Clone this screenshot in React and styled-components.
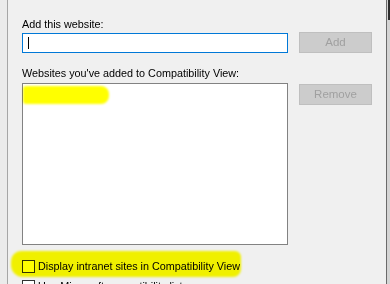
import React from "react";
import styled, { createGlobalStyle } from "styled-components";

const Global = createGlobalStyle`
  html, body { margin: 0; padding: 0; }
  body { width: 390px; height: 284px; overflow: hidden; background: #f0f0f0; }
  * { box-sizing: border-box; }
`;

const Page = styled.div`
  display: flex;
  width: 390px;
  height: 284px;
  overflow: hidden;
  font-family: "Liberation Sans", Arial, sans-serif;
  font-size: 10.8px;
  color: #000;
`;

const LeftStrip = styled.div`
  width: 8px;
  flex: none;
  background: #ebebeb;
  border-right: 1px solid #a6a6a6;
`;

const Dialog = styled.div`
  position: relative;
  flex: 1;
  background: #f0f0f0;
  padding: 16px 0 0 14px;
  display: grid;
  grid-template-columns: 266px 73px;
  column-gap: 11px;
  align-content: start;
`;

const RightEdge = styled.div`
  width: 4px;
  flex: none;
  display: flex;
  flex-direction: column;
  border-left: 1px solid #6a6a6a;
  background: #d4d4d4;
`;

const EdgeTop = styled.div`
  height: 20px;
  margin-left: 1px;
  background: #2d2d2d;
`;

const Label = styled.div`
  grid-column: 1 / 3;
  line-height: 16px;
  height: 16px;
  margin-top: ${(p) => p.$mt || 0}px;
  white-space: nowrap;
`;

const Input = styled.div`
  height: 20px;
  margin-top: 1px;
  border: 1px solid #0078d7;
  background: #fff;
  display: flex;
  align-items: center;
  padding-left: 5px;
`;

const Caret = styled.div`
  width: 1px;
  height: 12px;
  background: #000;
`;

const Button = styled.div`
  height: 21px;
  margin-top: ${(p) => p.$mt || 0}px;
  border: 1px solid #bfbfbf;
  background: #cccccc;
  color: #a0a0a0;
  font-size: 11.5px;
  display: flex;
  align-items: center;
  justify-content: center;
  line-height: 1;
`;

const ListBox = styled.div`
  height: 162px;
  margin-top: 2px;
  border: 1px solid #828282;
  background: #fff;
`;

const CheckRow = styled.label`
  grid-column: 1 / 3;
  display: flex;
  align-items: center;
  gap: 3px;
  height: 14px;
  margin-top: ${(p) => p.$mt || 0}px;
  white-space: nowrap;
  line-height: 14px;
`;

const Box = styled.span`
  width: 13px;
  height: 13px;
  flex: none;
  border: 1px solid #333;
  background: #fff;
`;

const Highlight = styled.div`
  position: absolute;
  background: #ffff00;
  mix-blend-mode: multiply;
  filter: blur(1.2px);
  border-radius: ${(p) => p.$r || "6px"};
  pointer-events: none;
`;

export default function App() {
  return (
    <Page>
      <Global />
      <LeftStrip />
      <Dialog>
        <Label>Add this website:</Label>
        <Input>
          <Caret />
        </Input>
        <Button $mt={0}>Add</Button>
        <Label $mt={12}>Websites you've added to Compatibility View:</Label>
        <ListBox />
        <Button $mt={3}>Remove</Button>
        <CheckRow $mt={14}>
          <Box />
          Display intranet sites in Compatibility View
        </CheckRow>
        <CheckRow $mt={6}>
          <Box />
          Use Microsoft compatibility lists
        </CheckRow>
        <Highlight
          style={{ left: 15, top: 86, width: 86, height: 18 }}
          $r="3px 8px 8px 3px"
        />
        <Highlight
          style={{ left: 3, top: 251, width: 230, height: 26 }}
          $r="10px 6px 8px 12px"
        />
      </Dialog>
      <RightEdge>
        <EdgeTop />
      </RightEdge>
    </Page>
  );
}
